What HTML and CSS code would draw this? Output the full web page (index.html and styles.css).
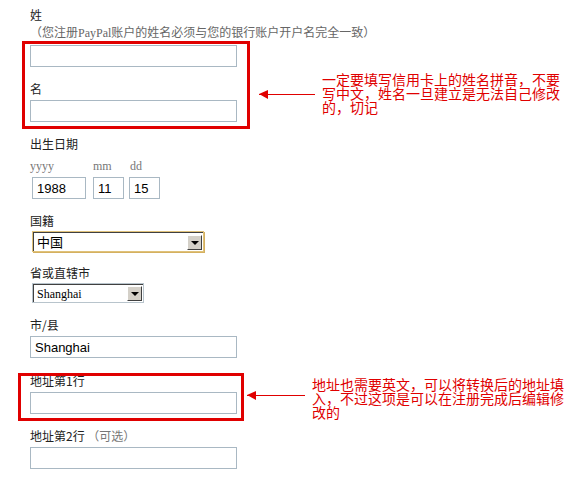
FILE: index.html
```html
<!DOCTYPE html>
<html lang="zh-CN">
<head>
    <meta charset="UTF-8">
    <title>PayPal 注册 - 个人信息</title>
    <link rel="stylesheet" href="styles.css">
</head>
<body>
    <div class="page">
        <div class="form">
            <div class="field">
                <div class="label">姓</div>
                <div class="hint">（您注册PayPal账户的姓名必须与您的银行账户开户名完全一致）</div>
                <input class="text" type="text">
            </div>
            <div class="field">
                <div class="label">名</div>
                <input class="text" type="text">
            </div>
            <div class="field">
                <div class="label">出生日期</div>
                <div class="date-row">
                    <div class="date-col yyyy">
                        <div class="sub">yyyy</div>
                        <input class="text" type="text" value="1988">
                    </div>
                    <div class="date-col mm">
                        <div class="sub">mm</div>
                        <input class="text" type="text" value="11">
                    </div>
                    <div class="date-col dd">
                        <div class="sub">dd</div>
                        <input class="text" type="text" value="15">
                    </div>
                </div>
            </div>
            <div class="field">
                <div class="label">国籍</div>
                <div class="select country">
                    <span class="value">中国</span>
                    <span class="btn"></span>
                </div>
            </div>
            <div class="field">
                <div class="label">省或直辖市</div>
                <div class="select province">
                    <span class="value">Shanghai</span>
                    <span class="btn"></span>
                </div>
            </div>
            <div class="field city">
                <div class="label">市/县</div>
                <input class="text" type="text" value="Shanghai">
            </div>
            <div class="field addr1">
                <div class="label">地址第1行</div>
                <input class="text" type="text">
            </div>
            <div class="field addr2">
                <div class="label">地址第2行 <span class="optional">（可选）</span></div>
                <input class="text" type="text">
            </div>
        </div>

        <!-- annotations -->
        <div class="mark mark-name"></div>
        <div class="arrow arrow-name"></div>
        <div class="note note-name">一定要填写信用卡上的姓名拼音，不要写中文，姓名一旦建立是无法自己修改的，切记</div>

        <div class="mark mark-addr"></div>
        <div class="arrow arrow-addr"></div>
        <div class="note note-addr">地址也需要英文，可以将转换后的地址填入，不过这项是可以在注册完成后编辑修改的</div>
    </div>
</body>
</html>
```

FILE: styles.css
```css
* {
    margin: 0;
    padding: 0;
    box-sizing: border-box;
}

body {
    background: #fff;
    font-family: "Noto Sans CJK SC", "Liberation Sans", sans-serif;
    font-size: 12px;
    color: #222;
}

.page {
    position: relative;
    width: 572px;
    height: 477px;
    overflow: hidden;
}

.form {
    padding: 8px 0 0 30px;
}

.field + .field {
    margin-top: 15px;
}

.field.city,
.field.addr1 {
    margin-top: 16px;
}

.label {
    height: 14px;
    line-height: 14px;
    margin-bottom: 4px;
    white-space: nowrap;
}

.hint {
    height: 14px;
    line-height: 14px;
    margin-top: 2px;
    margin-bottom: 5px;
    color: #666;
    font-family: "Liberation Serif", "Noto Sans CJK SC", serif;
    white-space: nowrap;
}

.optional {
    color: #777;
}

.text {
    display: block;
    width: 207px;
    height: 22px;
    border: 1px solid #a9b8c3;
    background: #fff;
    padding: 0 4px;
    font-family: "Liberation Sans", sans-serif;
    font-size: 13px;
    color: #000;
    outline: none;
}

.date-row {
    display: flex;
    margin-top: 8px;
}

.sub {
    height: 14px;
    line-height: 14px;
    margin-bottom: 4px;
    font-family: "Liberation Serif", serif;
    color: #777;
}

.yyyy {
    width: 63px;
}

.yyyy .text {
    width: 54px;
    margin-left: 2px;
}

.mm {
    width: 36px;
}

.mm .text,
.dd .text {
    width: 31px;
}

.dd .sub {
    padding-left: 1px;
}

.select {
    display: flex;
    align-items: center;
    justify-content: space-between;
    margin-left: 3px;
    background: #fff;
    border-left: 1px solid #404040;
    border-top: 1px solid #404040;
    color: #000;
}

.country {
    width: 170px;
    height: 19px;
    box-shadow: 0 0 0 1px #e0c27a, 1px 1px 0 1px #d4b060;
    font-size: 13px;
}

.province {
    width: 110px;
    height: 18px;
    box-shadow: 0 0 0 1px #b8c4cc;
    font-family: "Liberation Serif", serif;
    font-size: 12px;
}

.value {
    padding-left: 3px;
    line-height: 16px;
}

.btn {
    position: relative;
    width: 15px;
    height: 15px;
    margin-right: 1px;
    background: #d4d0c8;
    border-top: 1px solid #fff;
    border-left: 1px solid #fff;
    border-right: 1px solid #404040;
    border-bottom: 1px solid #404040;
}

.btn::after {
    content: "";
    position: absolute;
    left: 3px;
    top: 5px;
    border-left: 4px solid transparent;
    border-right: 4px solid transparent;
    border-top: 4px solid #000;
}

/* annotations */
.mark {
    position: absolute;
    border: 3px solid #e00000;
}

.mark-name {
    left: 22px;
    top: 41px;
    width: 228px;
    height: 88px;
}

.mark-addr {
    left: 18px;
    top: 373px;
    width: 226px;
    height: 48px;
}

.arrow {
    position: absolute;
    height: 1px;
    background: #e00000;
}

.arrow::before {
    content: "";
    position: absolute;
    left: 0;
    top: -4px;
    border-top: 4px solid transparent;
    border-bottom: 5px solid transparent;
    border-right: 9px solid #e00000;
}

.arrow-name {
    left: 259px;
    top: 94px;
    width: 56px;
}

.arrow-addr {
    left: 247px;
    top: 395px;
    width: 58px;
}

.note {
    position: absolute;
    color: #e00000;
    font-size: 14px;
    line-height: 14px;
}

.note-name {
    left: 322px;
    top: 72px;
    width: 240px;
}

.note-addr {
    left: 312px;
    top: 377px;
    width: 254px;
}
```
